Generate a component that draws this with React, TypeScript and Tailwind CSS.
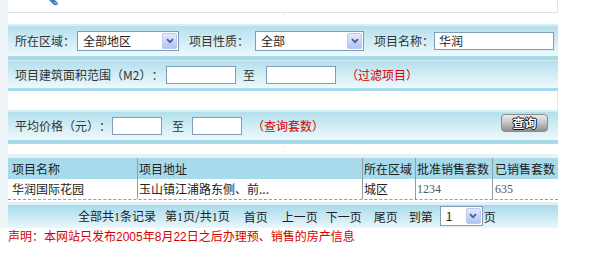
import { ReactNode } from "react";

const cjk = "font-['SimSun','Noto_Sans_CJK_SC',sans-serif]";

function Chevron() {
  return (
    <svg width="8" height="6" viewBox="0 0 8 6">
      <path d="M1 1.2 L4 4.2 L7 1.2" fill="none" stroke="#4a5f8a" strokeWidth="1.8" />
    </svg>
  );
}

function FakeSelect({ w, h, text }: { w: string; h: string; text: string }) {
  return (
    <div className={`flex items-center border border-[#7f9db9] bg-white ${w} ${h}`}>
      <span className="flex-1 pl-[5px] text-[#222]">{text}</span>
      <span className="mr-[1px] flex h-[16px] w-[15px] items-center justify-center rounded-[2px] border border-[#b9c9f0] bg-gradient-to-b from-[#e2eafd] to-[#b1c5f4]">
        <Chevron />
      </span>
    </div>
  );
}

function Box({ w, children }: { w: string; children?: ReactNode }) {
  return (
    <div className={`flex h-[18px] items-center border border-[#7f9db9] bg-white pl-[4px] text-[#222] ${w}`}>
      {children}
    </div>
  );
}

function Row({ top, mid, bot, children }: { top: string; mid: string; bot: string; children: ReactNode }) {
  return (
    <div className={`${top} ${bot} border-t-[#d6eef5] border-b-[#a6d9e9]`}>
      <div className={`flex items-center bg-gradient-to-b from-[#b3e0ed] to-[#eef9fc] pl-[7px] ${mid}`}>{children}</div>
    </div>
  );
}

export default function App() {
  return (
    <div className={`h-[269px] w-[590px] overflow-hidden bg-white text-[12px] leading-[14px] text-[#333] [text-spacing-trim:space-all] ${cjk}`}>
      <div className="flex">
        <div className="w-[8px] bg-[#eef4f7]" />
        <div className="w-[550px]">
          {/* top panel */}
          <div className="relative h-[13px] border-r border-b border-[#dde4e9] bg-white">
            <svg className="absolute left-[36px] top-[-6px]" width="18" height="12" viewBox="0 0 18 12">
              <path d="M6 2 L13 8 Q15 10 13 11 Q11 12 9 10 L3 4 Z" fill="#3f78c4" />
              <path d="M10 8 L13 10" stroke="#a9c6ee" strokeWidth="1" />
            </svg>
          </div>
          <div className="relative h-[11px] bg-white">
            <span className="absolute left-[275px] top-[1px] h-[1px] w-[1px] bg-[#ccd6dc]" />
          </div>

          <Row top="border-t-2" mid="h-[30px]" bot="border-b-4">
            <span className="w-[60px] shrink-0">所在区域：</span>
            <div className="ml-[2px]">
              <FakeSelect w="w-[102px]" h="h-[20px]" text="全部地区" />
            </div>
            <span className="ml-[10px] w-[60px] shrink-0">项目性质：</span>
            <div className="ml-[6px]">
              <FakeSelect w="w-[109px]" h="h-[20px]" text="全部" />
            </div>
            <span className="ml-[10px] w-[60px] shrink-0">项目名称：</span>
            <Box w="w-[120px]">华润</Box>
          </Row>

          <Row top="border-t" mid="h-[27px]" bot="border-b-[3px]">
            <span className="w-[151px] shrink-0 whitespace-nowrap">项目建筑面积范围（M2）：</span>
            <Box w="w-[70px]" />
            <span className="ml-[7px]">至</span>
            <div className="ml-[11px]">
              <Box w="w-[70px]" />
            </div>
            <span className="ml-[10px] text-[#d40000]">（过滤项目）</span>
          </Row>

          <div className="h-[19px] border-r border-[#dbe8ee] bg-white" />

          <Row top="border-t-2" mid="h-[28px]" bot="border-b-4">
            <span className="w-[97px] shrink-0 whitespace-nowrap">平均价格（元）：</span>
            <Box w="w-[50px]" />
            <span className="ml-[10px]">至</span>
            <div className="ml-[8px]">
              <Box w="w-[50px]" />
            </div>
            <span className="ml-[10px] text-[#d40000]">（查询套数）</span>
            <button className="ml-auto mr-[10px] mt-[-6px] flex h-[18px] w-[47px] items-center justify-center rounded-[4px] border border-[#8a8a8a] bg-gradient-to-b from-[#ececec] via-[#c4c4c4] to-[#8f8f8f] font-bold text-white [text-shadow:1px_0_0_#111,-1px_0_0_#111,0_1px_0_#111,0_-1px_0_#111]">
              查询
            </button>
          </Row>

          <div className="relative h-[10px] bg-white">
            <span className="absolute left-[275px] top-[2px] h-[1px] w-[1px] bg-[#ccd6dc]" />
          </div>

          {/* result table */}
          <div className="border-t-4 border-[#e6f2f6]">
            <div className="grid h-[21px] grid-cols-[129px_225px_53px_77px_65px] items-center bg-[#a7dbeb] text-[#222]">
              <span className="pl-[4px]">项目名称</span>
              <span className="self-stretch border-l border-[#8f9ea4] pl-[1px] pt-[4px]">项目地址</span>
              <span className="self-stretch border-l border-[#8f9ea4] pl-[1px] pt-[4px]">所在区域</span>
              <span className="self-stretch border-l border-[#8f9ea4] pl-[1px] pt-[4px]">批准销售套数</span>
              <span className="self-stretch border-l border-[#8f9ea4] pl-[2px] pt-[4px]">已销售套数</span>
            </div>
            <div className="grid h-[21px] grid-cols-[129px_225px_53px_77px_65px] border-b border-dashed border-[#9a9a9a] bg-white text-[#222]">
              <span className="pl-[4px] pt-[3px]">华润国际花园</span>
              <span className="border-l border-[#8f9ea4] pl-[1px] pt-[3px]">玉山镇江浦路东侧、前...</span>
              <span className="border-l border-[#8f9ea4] pl-[1px] pt-[3px]">城区</span>
              <span className="border-l border-[#8f9ea4] pl-[1px] pt-[3px] font-['Liberation_Serif',serif] text-[#555]">1234</span>
              <span className="border-l border-[#8f9ea4] pl-[2px] pt-[3px] font-['Liberation_Serif',serif] text-[#555]">635</span>
            </div>
          </div>

          {/* pager */}
          <div className="mt-[2px] border-t-[3px] border-[#e3f1f6]">
            <div className="flex h-[23px] items-center bg-gradient-to-b from-[#a6dbeb] to-[#ebf7fb] pl-[70px] text-[#222]">
              <span>
                全部共<span className="font-['Liberation_Serif',serif]">1</span>条记录
              </span>
              <span className="ml-[9px]">
                第<span className="font-['Liberation_Serif',serif]">1</span>页/共<span className="font-['Liberation_Serif',serif]">1</span>页
              </span>
              <span className="ml-[14px]">首页</span>
              <span className="ml-[14px]">上一页</span>
              <span className="ml-[8px]">下一页</span>
              <span className="ml-[12px]">尾页</span>
              <span className="ml-[11px]">到第</span>
              <div className="ml-[7px] mt-[-2px]">
                <FakeSelect w="w-[43px]" h="h-[20px]" text="1" />
              </div>
              <span className="ml-[1px]">页</span>
            </div>
          </div>
        </div>
      </div>

      <div className={`mt-[1px] pl-[8px] text-[#d40000] ${cjk}`}>
        声明：本网站只发布<span className="font-['Liberation_Sans',sans-serif]">2005</span>年<span className="font-['Liberation_Sans',sans-serif]">8</span>月<span className="font-['Liberation_Sans',sans-serif]">22</span>日之后办理预、销售的房产信息
      </div>
    </div>
  );
}
